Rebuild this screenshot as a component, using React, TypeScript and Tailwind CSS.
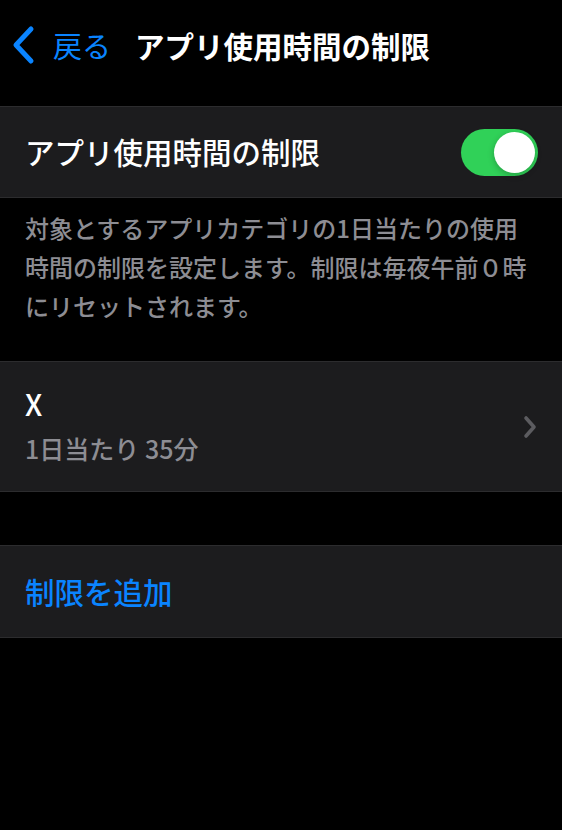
const font = { fontFamily: '"Noto Sans CJK JP", "Noto Sans", sans-serif' };

function BackChevron() {
  return (
    <svg width="26" height="40" viewBox="0 0 26 40" fill="none" className="shrink-0">
      <path
        d="M20 4 L5 20 L20 36"
        stroke="currentColor"
        strokeWidth="5"
        strokeLinecap="round"
        strokeLinejoin="round"
      />
    </svg>
  );
}

function DisclosureChevron() {
  return (
    <svg width="16" height="24" viewBox="0 0 16 24" fill="none" className="shrink-0">
      <path
        d="M4 3 L12 12 L4 21"
        stroke="#5c5c60"
        strokeWidth="3.6"
        strokeLinecap="round"
        strokeLinejoin="round"
      />
    </svg>
  );
}

function Toggle({ on }: { on: boolean }) {
  return (
    <div
      className={`flex h-[47px] w-[77px] items-center rounded-full p-[3px] ${
        on ? "justify-end bg-[#30d158]" : "justify-start bg-[#39393d]"
      }`}
    >
      <div className="h-[41px] w-[41px] rounded-full bg-white shadow-[0_2px_6px_rgba(0,0,0,0.25)]" />
    </div>
  );
}

export default function App() {
  return (
    <div className="min-h-[830px] w-full bg-black text-white" style={font}>
      {/* Navigation bar */}
      <div className="flex h-[106px] items-start pt-[24px]">
        <div className="flex items-center pl-[11px] text-[#0a84ff]">
          <BackChevron />
          <span className="ml-[16px] text-[29px] leading-[42px]">戻る</span>
        </div>
        <h1 className="ml-[24px] text-[29.5px] font-bold leading-[42px]">アプリ使用時間の制限</h1>
      </div>

      {/* Main toggle */}
      <div className="flex h-[92px] items-center justify-between border-y border-[#2c2c2e] bg-[#1c1c1e] pl-[25px] pr-[24px]">
        <span className="text-[29.5px] font-medium leading-none">アプリ使用時間の制限</span>
        <Toggle on />
      </div>

      <div className="px-[25px] pb-[36px] pt-[10px] text-[24px] font-medium leading-[39px] text-[#8d8d93]">
        <p>対象とするアプリカテゴリの1日当たりの使用</p>
        <p>時間の制限を設定します。制限は毎夜午前０時</p>
        <p>にリセットされます。</p>
      </div>

      {/* Existing limit */}
      <div className="flex h-[131px] items-start justify-between border-y border-[#2c2c2e] bg-[#1c1c1e] pl-[25px] pr-[24px]">
        <div className="flex flex-col pt-[21px]">
          <span className="text-[29px] font-medium leading-[40px]">X</span>
          <span className="mt-[5px] text-[25px] font-medium leading-[40px] text-[#8d8d93]">1日当たり 35分</span>
        </div>
        <div className="self-center">
          <DisclosureChevron />
        </div>
      </div>

      <div className="h-[53px]" />

      {/* Add limit */}
      <div className="flex h-[93px] items-center border-y border-[#2c2c2e] bg-[#1c1c1e] pl-[25px]">
        <span className="text-[29.5px] font-medium text-[#0a84ff]">制限を追加</span>
      </div>
    </div>
  );
}
